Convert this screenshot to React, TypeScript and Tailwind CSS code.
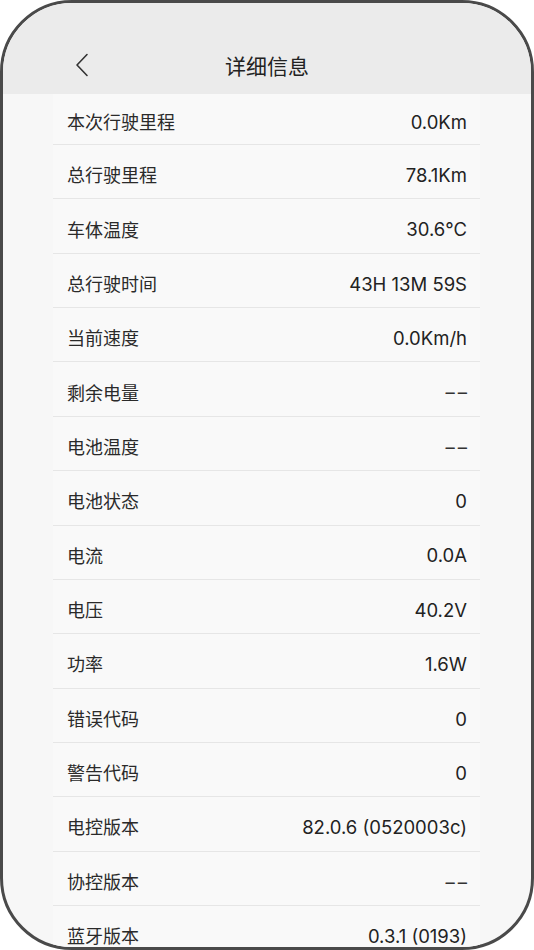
import React from "react";

const rows: [string, string][] = [
  ["本次行驶里程", "0.0Km"],
  ["总行驶里程", "78.1Km"],
  ["车体温度", "30.6℃"],
  ["总行驶时间", "43H 13M 59S"],
  ["当前速度", "0.0Km/h"],
  ["剩余电量", "––"],
  ["电池温度", "––"],
  ["电池状态", "0"],
  ["电流", "0.0A"],
  ["电压", "40.2V"],
  ["功率", "1.6W"],
  ["错误代码", "0"],
  ["警告代码", "0"],
  ["电控版本", "82.0.6 (0520003c)"],
  ["协控版本", "––"],
  ["蓝牙版本", "0.3.1 (0193)"],
];

export default function App() {
  return (
    <div
      className="w-[534px] h-[950px] bg-white"
      style={{ fontFamily: '"Noto Sans", "Noto Sans CJK SC", sans-serif' }}
    >
      <div className="w-full h-full border-[3px] border-[#4a4a4a] rounded-[72px] overflow-hidden bg-[#f7f7f7] flex flex-col">
        <div className="h-[91px] shrink-0 bg-[#ebebeb] grid grid-cols-[1fr_auto_1fr] pt-[36px]">
          <div className="flex items-center pl-[72px] -mt-[4px]">
            <svg width="14" height="24" viewBox="0 0 14 24" fill="none">
              <path d="M12 1.5 L2 12 L12 22.5" stroke="#333" strokeWidth="1.6" strokeLinecap="round" strokeLinejoin="round" />
            </svg>
          </div>
          <div className="flex items-center text-[21px] text-[#222] leading-none">详细信息</div>
          <div />
        </div>
        <div className="ml-[50px] w-[427px] flex flex-col">
          {rows.map(([k, v], i) => (
            <div
              key={k}
              className={
                i === 0
                  ? "h-[51px] shrink-0 border-b border-[#e6e6e6] flex items-center justify-between pl-[14px] pr-[13px] pt-[6px] bg-[#f9f9f9]"
                  : "h-[54.36px] shrink-0 border-b border-[#e6e6e6] flex items-center justify-between pl-[14px] pr-[13px] pt-[7px] bg-[#f9f9f9]"
              }
            >
              <span className="text-[18px] text-[#2a2a2a] leading-none">{k}</span>
              <span
                className={
                  v === "––"
                    ? "text-[18.5px] text-[#333] leading-none tracking-[3px] -mr-[3px]"
                    : "text-[18.5px] text-[#222] leading-none"
                }
                style={{ fontFamily: 'Inter, "Noto Sans CJK SC", sans-serif' }}
              >
                {v}
              </span>
            </div>
          ))}
        </div>
      </div>
    </div>
  );
}
